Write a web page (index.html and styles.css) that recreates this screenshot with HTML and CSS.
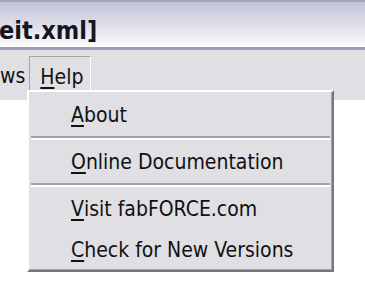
FILE: index.html
```html
<!DOCTYPE html>
<html lang="en">

<head>
    <meta charset="UTF-8" />
    <title>Help menu</title>
    <link rel="stylesheet" href="styles.css">
</head>

<body>
    <div class="titlebar">
        <span class="title">eit.xml]</span>
    </div>

    <div class="menubar">
        <span class="menuItem">ws</span>
        <span class="menuItem open"><u>H</u>elp</span>
    </div>

    <!-- The open Help menu -->
    <div class="dropdown">
        <div class="entry"><u>A</u>bout</div>
        <div class="separator"></div>
        <div class="entry"><u>O</u>nline Documentation</div>
        <div class="separator"></div>
        <div class="entry"><u>V</u>isit fabFORCE.com</div>
        <div class="entry"><u>C</u>heck for New Versions</div>
    </div>
</body>

</html>
```

FILE: styles.css
```css
* {
    box-sizing: border-box;
}

body {
    margin: 0;
    width: 365px;
    height: 301px;
    background-color: #ffffff;
    font-family: "DejaVu Sans Condensed", "DejaVu Sans", sans-serif;
    position: relative;
    overflow: hidden;
}

.titlebar {
    height: 50px;
    border-top: 2px solid #a3a3bd;
    border-bottom: 3px solid #9d9db8;
    background: linear-gradient(#c2c2d6, #d8d8e6 40%, #f0f0f6 82%, #ffffff);
    display: flex;
    align-items: center;
}

.title {
    font-family: "DejaVu Sans Condensed", "DejaVu Sans", sans-serif;
    font-weight: bold;
    font-size: 25px;
    color: #16161e;
    margin-left: -1px;
    padding-top: 12px;
}

.menubar {
    height: 50px;
    background-color: #e0dfe3;
    display: flex;
    align-items: flex-start;
    padding-top: 6px;
    font-size: 21px;
    color: #111111;
}

.menuItem {
    height: 34px;
    display: flex;
    align-items: center;
    padding: 6px 7px 0 10px;
}

.menuItem:first-child {
    padding: 6px 4px 0 0;
}

.menuItem.open {
    border-top: 1px solid #a4a3a8;
    border-left: 1px solid #a4a3a8;
    border-right: 1px solid #ffffff;
}

u {
    text-underline-offset: 3px;
}

/* Dropdown menu */
.dropdown {
    position: absolute;
    top: 90px;
    left: 27px;
    width: 307px;
    background-color: #e0dfe3;
    border-top: 2px solid #ffffff;
    border-left: 2px solid #ffffff;
    border-right: 2px solid #77767c;
    border-bottom: 2px solid #77767c;
    box-shadow: inset -1px -1px 0 #a4a3a8;
    padding-top: 2px;
    font-size: 21px;
    color: #111111;
}

.entry {
    height: 41px;
    display: flex;
    align-items: center;
    padding-left: 42px;
    padding-top: 1px;
}

.separator {
    height: 4px;
    margin: 1px 2px;
    border-top: 2px solid #a4a3a8;
    border-bottom: 2px solid #ffffff;
}
```
